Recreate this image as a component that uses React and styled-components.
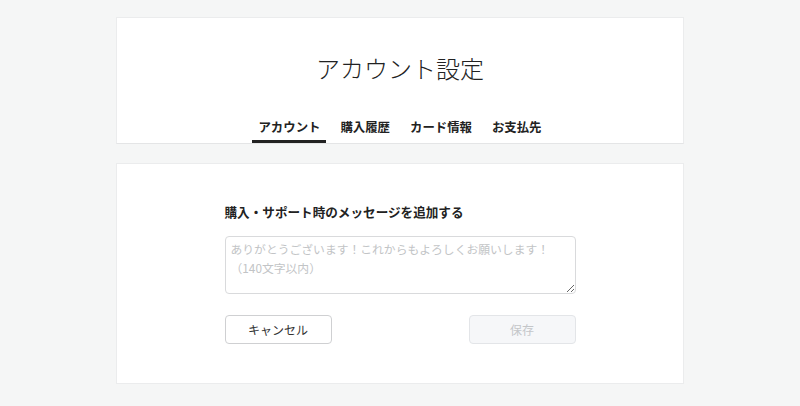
import React from 'react';
import styled, {createGlobalStyle} from 'styled-components';

const GlobalStyle = createGlobalStyle`
  html, body {
    margin: 0;
    padding: 0;
    background: #f5f6f6;
  }

  body {
    font-family: "Noto Sans CJK JP", "Noto Sans", sans-serif;
    color: #222;
  }
`

const tabs = ['アカウント', '購入履歴', 'カード情報', 'お支払先'];

const App = () => {
    return (
        <Page>
            <GlobalStyle/>
            <HeaderCard>
                <Title>アカウント設定</Title>
                <TabList>
                    {tabs.map((tab, i) => (
                        <Tab key={tab} $active={i === 0}>{tab}</Tab>
                    ))}
                </TabList>
            </HeaderCard>

            <FormCard>
                <FormBox>
                    <Label>購入・サポート時のメッセージを追加する</Label>
                    <Message placeholder='ありがとうございます！これからもよろしくお願いします！（140文字以内）'/>
                    <ButtonRow>
                        <Button>キャンセル</Button>
                        <Button $disabled>保存</Button>
                    </ButtonRow>
                </FormBox>
            </FormCard>
        </Page>
    );
};

export default App;

const Page = styled.div`
  width: 568px;
  margin: 0 auto;
  padding: 17px 0 22px;
  display: flex;
  flex-direction: column;
  gap: 19px;
`

const Card = styled.div`
  background: #fff;
  border: 1px solid #ebeced;
`

const HeaderCard = styled(Card)`
  display: flex;
  flex-direction: column;
  align-items: center;
  padding-top: 32px;
  border-bottom-color: #e4e5e6;
`

const Title = styled.h1`
  margin: 0;
  font-size: 24px;
  line-height: 36px;
  font-weight: 300;
  letter-spacing: 0;
`

const TabList = styled.div`
  display: flex;
  gap: 8px;
  margin-top: 31px;
`

const Tab = styled.div`
  padding: 0 6px 3px;
  font-size: 12.4px;
  line-height: 20px;
  font-weight: 700;
  border-bottom: 3px solid ${({$active}) => ($active ? '#222' : 'transparent')};
  cursor: pointer;
`

const FormCard = styled(Card)`
  padding: 38px 0 39px;
`

const FormBox = styled.div`
  width: 351px;
  margin: 0 auto;
  display: flex;
  flex-direction: column;
`

const Label = styled.div`
  font-size: 12.6px;
  line-height: 20px;
  font-weight: 700;
  margin-bottom: 14px;
`

const Message = styled.textarea`
  box-sizing: border-box;
  width: 100%;
  height: 58px;
  padding: 2px 5px;
  border: 1px solid #d9dadc;
  border-radius: 4px;
  font-family: inherit;
  font-size: 11.8px;
  line-height: 19px;
  color: #222;
  outline: none;

  &::placeholder {
    color: #c2c4c6;
  }
`

const ButtonRow = styled.div`
  display: flex;
  justify-content: space-between;
  margin-top: 21px;
`

const Button = styled.button`
  box-sizing: border-box;
  width: 107px;
  height: 29px;
  border-radius: 4px;
  font-family: inherit;
  font-size: 12px;
  border: 1px solid ${({$disabled}) => ($disabled ? '#e3e5e8' : '#cfd0d2')};
  background: ${({$disabled}) => ($disabled ? '#f6f7f9' : '#fff')};
  color: ${({$disabled}) => ($disabled ? '#c4c6c9' : '#333')};
  cursor: ${({$disabled}) => ($disabled ? 'default' : 'pointer')};
`
